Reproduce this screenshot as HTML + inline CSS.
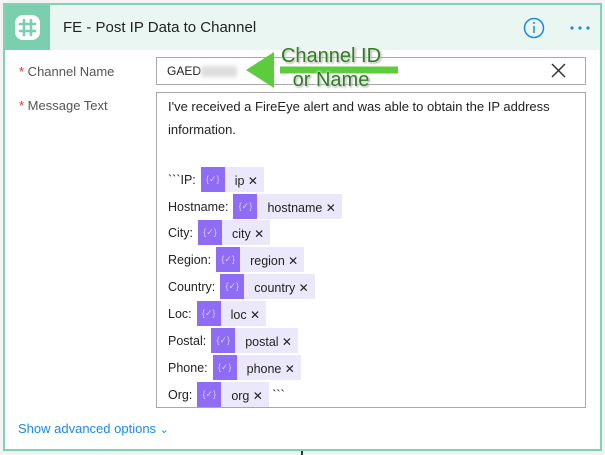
<!DOCTYPE html>
<html><head><meta charset="utf-8"><style>
*{box-sizing:border-box;margin:0;padding:0}
body{width:605px;height:455px;background:#f3f3f3;position:relative;overflow:hidden;font-family:"Liberation Sans",sans-serif;color:#222}
.card{position:absolute;left:3px;top:3px;width:599px;height:448px;border:2px solid #7fd3b2;background:#fff}
.hdr{position:absolute;left:0;top:0;width:595px;height:45px;background:#eaf6f2}
.ico{position:absolute;left:0;top:0;width:45px;height:45px;background:#7acfae}
.title{position:absolute;left:58px;top:14px;font-size:15px;color:#222}
.lbl{position:absolute;font-size:13px;color:#555}
.lbl b{color:#d13438;font-weight:normal}
.box{position:absolute;border:1px solid #a8a8a8;background:#fff}
.t{position:absolute;left:168px;font-size:13px;color:#222}
.row{position:absolute;left:168px;height:25px;display:flex;align-items:center;font-size:12.5px}
.tok{display:flex;height:25px;margin-left:5px}
.tok i{width:24px;height:25px;background:#8e6cf5;color:#d8cffc;font-style:normal;font-size:9px;display:flex;align-items:center;justify-content:center}
.tok span{background:#ece8fc;padding:3px 6px 0 10px;font-size:12.5px;line-height:22px}
.tok span:after{content:" \2715";font-size:12px}
</style></head><body>
<div class="card">
<div class="hdr"></div>
<div class="ico"><svg width="45" height="45" viewBox="0 0 45 45"><rect x="10" y="10" width="25" height="25" rx="8" fill="#fff"/><g stroke="#7acfae" stroke-width="2.6" stroke-linecap="round"><line x1="19" y1="15" x2="19" y2="30"/><line x1="26" y1="15" x2="26" y2="30"/><line x1="15" y1="19" x2="30" y2="19"/><line x1="15" y1="26" x2="30" y2="26"/></g></svg></div>
<div class="title">FE - Post IP Data to Channel</div>
<svg style="position:absolute;left:518px;top:12px" width="22" height="22"><circle cx="11" cy="11" r="9.5" fill="none" stroke="#1e88e5" stroke-width="1.5"/><line x1="11" y1="9" x2="11" y2="16" stroke="#1e88e5" stroke-width="1.5"/><circle cx="11" cy="6" r="1" fill="#1e88e5"/></svg>
<svg style="position:absolute;left:564px;top:20px" width="22" height="6"><circle cx="3" cy="3" r="1.6" fill="#1e88e5"/><circle cx="11" cy="3" r="1.6" fill="#1e88e5"/><circle cx="19" cy="3" r="1.6" fill="#1e88e5"/></svg>
</div>
<div class="lbl" style="left:19px;top:64px"><b>*</b> Channel Name</div>
<div class="lbl" style="left:19px;top:98px"><b>*</b> Message Text</div>
<div class="box" style="left:156px;top:57px;width:430px;height:28px"></div>
<div style="position:absolute;left:167px;top:64px;font-size:12px">GAED<span style="display:inline-block;width:36px;height:11px;background:#ddd;filter:blur(2px);vertical-align:middle"></span></div>
<svg style="position:absolute;left:551px;top:63px" width="15" height="15"><path d="M1 1L14 14M14 1L1 14" stroke="#333" stroke-width="1.5"/></svg>
<div class="box" style="left:156px;top:92px;width:430px;height:316px"></div>
<div class="t" style="top:99px">I've received a FireEye alert and was able to obtain the IP address</div>
<div class="t" style="top:122px">information.</div>
<div class="row" style="top:167px">&#96;&#96;&#96;IP:<div class="tok"><i>{✓}</i><span>ip</span></div></div>
<div class="row" style="top:194px">Hostname:<div class="tok"><i>{✓}</i><span>hostname</span></div></div>
<div class="row" style="top:220px">City:<div class="tok"><i>{✓}</i><span>city</span></div></div>
<div class="row" style="top:247px">Region:<div class="tok"><i>{✓}</i><span>region</span></div></div>
<div class="row" style="top:274px">Country:<div class="tok"><i>{✓}</i><span>country</span></div></div>
<div class="row" style="top:301px">Loc:<div class="tok"><i>{✓}</i><span>loc</span></div></div>
<div class="row" style="top:328px">Postal:<div class="tok"><i>{✓}</i><span>postal</span></div></div>
<div class="row" style="top:355px">Phone:<div class="tok"><i>{✓}</i><span>phone</span></div></div>
<div class="row" style="top:382px">Org:<div class="tok"><i>{✓}</i><span>org</span></div>&nbsp;&#96;&#96;&#96;</div>
<div style="position:absolute;left:18px;top:421px;font-size:13px;color:#1e88e5">Show advanced options <span style="font-size:11px">&#8964;</span></div>
<div style="position:absolute;left:301px;top:451px;width:2px;height:4px;background:#333"></div>
<svg style="position:absolute;left:240px;top:40px" width="170" height="60">
<path d="M158 30 L40 30" stroke="#5ccc3c" stroke-width="7"/>
<path d="M6 30 L34 12 L34 48 Z" fill="#5ccc3c"/>
</svg>
<div style="position:absolute;left:276px;top:44px;width:110px;font-size:20px;color:#2e7d22;text-align:center;line-height:24px;text-shadow:0 0 2px #fff,0 0 3px #fff,1px 1px 2px #666">Channel ID<br>or Name</div>
</body></html>
